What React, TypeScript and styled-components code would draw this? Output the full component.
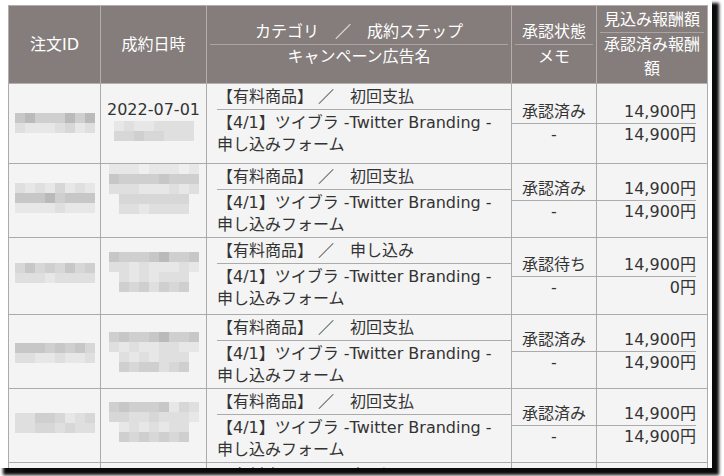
import styled, { createGlobalStyle } from "styled-components";

const GlobalStyle = createGlobalStyle`
  html, body {
    margin: 0;
    padding: 0;
    background: #ffffff;
  }
  body {
    width: 724px;
    height: 476px;
    overflow: hidden;
  }
`;

const shades: Record<string, string> = {
  a: "#efefef",
  b: "#e7e7e7",
  c: "#dfdfdf",
  d: "#d7d7d7",
  e: "#cfcfcf",
  f: "#c7c7c7",
  g: "#bababa",
  h: "#adadad",
};

type Order = {
  height: number;
  date?: string;
  idTop: number;
  idMosaic: string[];
  dateTop: number;
  dateMosaic: string[];
  step: string;
  status: string;
  expected: string;
  approved: string;
};

const orders: Order[] = [
  {
    height: 80,
    date: "2022-07-01",
    idTop: 29,
    idMosaic: ["fgeeegeg", "cbbbcdbc"],
    dateTop: 15,
    dateMosaic: ["bcbbcccc", "ddeddccc"],
    step: "初回支払",
    status: "承認済み",
    expected: "14,900円",
    approved: "14,900円",
  },
  {
    height: 74,
    idTop: 19,
    idMosaic: ["cbcbdbcb", "fffgefff", "bbbbcbbb"],
    dateTop: 0,
    dateMosaic: ["bbbabbbab", "feeeefeee", "cccbbbcbc", ".ddddddd.", ".ccbcccc."],
    step: "初回支払",
    status: "承認済み",
    expected: "14,900円",
    approved: "14,900円",
  },
  {
    height: 77,
    idTop: 25,
    idMosaic: ["dfdedfde", "cccbcccc"],
    dateTop: 14,
    dateMosaic: ["feeefgeef", "ccbcbbbcb", ".cbcbccc.", ".edecede."],
    step: "申し込み",
    status: "承認待ち",
    expected: "14,900円",
    approved: "0円",
  },
  {
    height: 74,
    idTop: 28,
    idMosaic: ["fffefefd", "ccbbcbbc"],
    dateTop: 17,
    dateMosaic: ["efeefgeef", "cbcbbccbb", ".cbcbccc.", ".edeecde."],
    step: "初回支払",
    status: "承認済み",
    expected: "14,900円",
    approved: "14,900円",
  },
  {
    height: 74,
    idTop: 24,
    idMosaic: ["cceedbcd", "ccddcdcc"],
    dateTop: 13,
    dateMosaic: ["efeeefbdc", "ddccdcccb", ".bcbcbcc.", ".ededede."],
    step: "初回支払",
    status: "承認済み",
    expected: "14,900円",
    approved: "14,900円",
  },
  {
    height: 74,
    idTop: 24,
    idMosaic: ["cceedbcd", "ccddcdcc"],
    dateTop: 13,
    dateMosaic: ["efeeefbdc", "ddccdcccb"],
    step: "申し込み",
    status: "承認済み",
    expected: "14,900円",
    approved: "14,900円",
  },
];

const Mosaic = ({ rows }: { rows: string[] }) => (
  <MosaicGrid $cols={rows[0].length}>
    {rows.flatMap((row, r) =>
      row.split("").map((k, c) => <Pixel key={`${r}-${c}`} $color={shades[k] ?? "transparent"} />)
    )}
  </MosaicGrid>
);

const App = () => {
  return (
    <>
      <GlobalStyle />
      <Window>
        <Table>
          <colgroup>
            <col style={{ width: 92 }} />
            <col style={{ width: 106 }} />
            <col style={{ width: 305 }} />
            <col style={{ width: 85 }} />
            <col style={{ width: 111 }} />
          </colgroup>
          <thead>
            <HeadRow>
              <Th>注文ID</Th>
              <Th>成約日時</Th>
              <Th>
                <HeadLine>カテゴリ　／　成約ステップ</HeadLine>
                <HeadLine $divided>キャンペーン広告名</HeadLine>
              </Th>
              <Th>
                <HeadLine>承認状態</HeadLine>
                <HeadLine $divided>メモ</HeadLine>
              </Th>
              <Th>
                <HeadLine>見込み報酬額</HeadLine>
                <HeadLine $divided>承認済み報酬額</HeadLine>
              </Th>
            </HeadRow>
          </thead>
          <tbody>
            {orders.map((o, i) => (
              <Row key={i} $height={o.height}>
                <BlurCell $top={o.idTop}>
                  <Mosaic rows={o.idMosaic} />
                </BlurCell>
                <BlurCell $top={o.dateTop}>
                  {o.date && <DateText>{o.date}</DateText>}
                  <Mosaic rows={o.dateMosaic} />
                </BlurCell>
                <CategoryCell>
                  <CategoryLine>【有料商品】 ／　{o.step}</CategoryLine>
                  <CampaignLine>【4/1】ツイブラ -Twitter Branding - 申し込みフォーム</CampaignLine>
                </CategoryCell>
                <Td>
                  <SubLine>{o.status}</SubLine>
                  <SubLine $divided>-</SubLine>
                </Td>
                <AmountCell>
                  <SubLine>{o.expected}</SubLine>
                  <SubLine $divided>{o.approved}</SubLine>
                </AmountCell>
              </Row>
            ))}
          </tbody>
        </Table>
      </Window>
    </>
  );
};

const Window = styled.div`
  width: 712px;
  height: 468px;
  padding: 5px 0 0 8px;
  box-sizing: border-box;
  background: #ffffff;
  overflow: hidden;
  box-shadow: 5px 5px 3px 2px #0b0b0b;
  font-family: "DejaVu Sans", "Noto Sans CJK JP", sans-serif;
`;

const Table = styled.table`
  width: 700px;
  table-layout: fixed;
  border-collapse: collapse;
  font-size: 16px;
  color: #333333;
`;

const HeadRow = styled.tr`
  height: 78px;
`;

const Th = styled.th`
  background: #847d7b;
  color: #ffffff;
  font-weight: normal;
  line-height: 24px;
  padding: 0 3px;
  border: 1px solid #b3aeac;
  text-align: center;
  vertical-align: middle;
`;

const HeadLine = styled.div<{ $divided?: boolean }>`
  border-top: ${(p) => (p.$divided ? "1px solid #aaa5a3" : "none")};
`;

const Row = styled.tr<{ $height: number }>`
  height: ${(p) => p.$height}px;
`;

const Td = styled.td`
  background: #f4f4f4;
  border: 1px solid #ababab;
  padding: 0;
  line-height: 22px;
  text-align: center;
  vertical-align: middle;
`;

const BlurCell = styled(Td)<{ $top: number }>`
  vertical-align: top;
  padding-top: ${(p) => p.$top}px;
`;

const DateText = styled.div`
  line-height: 22px;
  text-align: center;
`;

const MosaicGrid = styled.div<{ $cols: number }>`
  display: grid;
  grid-template-columns: repeat(${(p) => p.$cols}, 10px);
  grid-auto-rows: 10px;
  justify-content: center;
`;

const Pixel = styled.div<{ $color: string }>`
  background: ${(p) => p.$color};
`;

const CategoryCell = styled(Td)`
  text-align: left;
  vertical-align: top;
  padding: 1px 0 0 10px;
`;

const CategoryLine = styled.div`
  height: 24px;
  line-height: 24px;
  overflow: visible;
`;

const CampaignLine = styled.div`
  height: 44px;
  border-top: 1px solid #ababab;
  padding: 2px 8px 0 0;
  line-height: 22px;
  overflow: visible;
`;

const SubLine = styled.div<{ $divided?: boolean }>`
  height: 22px;
  border-top: ${(p) => (p.$divided ? "1px solid #ababab" : "none")};
  line-height: 22px;
`;

const AmountCell = styled(Td)`
  text-align: right;
  padding-right: 11px;
`;

export default App;
